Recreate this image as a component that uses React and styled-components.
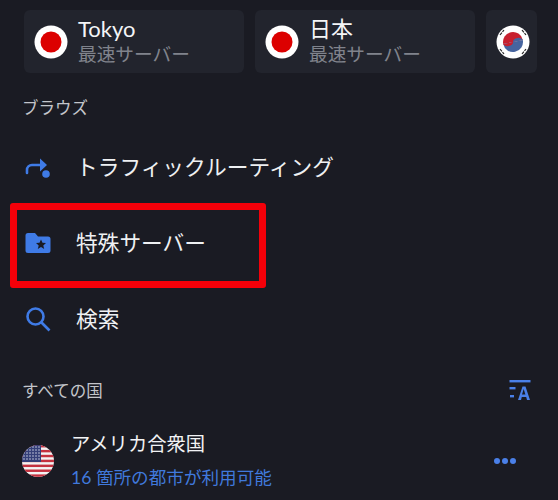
import React from 'react';
import styled, { createGlobalStyle } from 'styled-components';

const GlobalStyle = createGlobalStyle`
    html, body {
        margin: 0;
        padding: 0;
        background: #1a1b23;
    }
    * {
        box-sizing: border-box;
    }
`;

const Page = styled.div`
    width: 558px;
    height: 500px;
    overflow: hidden;
    background: #1a1b23;
    font-family: Lato, "Noto Sans CJK JP", sans-serif;
    color: #f2f3f5;
    padding-top: 10px;
`;

const Recents = styled.div`
    display: flex;
    gap: 11px;
    padding-left: 24px;
`;

const ServerCard = styled.div`
    flex: 0 0 ${p => p.$width}px;
    height: 63px;
    display: flex;
    align-items: center;
    gap: 10px;
    padding-left: 10px;
    background: #22242d;
    border-radius: 6px;
`;

const CardText = styled.div`
    display: flex;
    flex-direction: column;
    margin-top: -2px;
`;

const CardTitle = styled.div`
    font-size: 22px;
    line-height: 26px;
    color: #f4f5f7;
`;

const CardSub = styled.div`
    font-size: 18.7px;
    line-height: 24px;
    color: #80838c;
`;

const SectionLabel = styled.div`
    font-size: 16.5px;
    line-height: 20px;
    color: #c3c5ca;
    padding-left: 22px;
`;

const BrowseLabel = styled(SectionLabel)`
    margin-top: 25px;
    margin-bottom: 9px;
`;

const NavRow = styled.div`
    position: relative;
    height: 76px;
    display: flex;
    align-items: center;
    padding-left: 25px;
    font-size: 21.7px;
    color: #eef0f2;
`;

const NavIcon = styled.div`
    width: 51px;
    flex: none;
    display: flex;
    align-items: center;
    padding-top: 4px;
`;

const Highlight = styled.div`
    position: absolute;
    left: 10px;
    top: 0;
    width: 256px;
    height: 85px;
    border: 7px solid #f40009;
    border-radius: 3px;
`;

const AllHeader = styled.div`
    display: flex;
    align-items: center;
    justify-content: space-between;
    padding-right: 27px;
    margin-top: 25px;
`;

const CountryRow = styled.div`
    display: flex;
    align-items: center;
    padding: 30px 42px 0 22px;
`;

const CountryText = styled.div`
    flex: 1;
    margin-left: 17px;
    display: flex;
    flex-direction: column;
    gap: 9px;
`;

const CountryName = styled.div`
    font-size: 19.3px;
    line-height: 26px;
    color: #f2f3f5;
`;

const CountrySub = styled.div`
    font-size: 17.6px;
    line-height: 24px;
    color: #4079dc;
`;

const Dots = styled.div`
    display: flex;
    gap: 2px;
`;

const Dot = styled.span`
    width: 6px;
    height: 6px;
    border-radius: 50%;
    background: #4a80e8;
`;

const JapanFlag = () => (
    <svg width="34" height="34" viewBox="0 0 34 34">
        <circle cx="17" cy="17" r="16.5" fill="#fff" />
        <circle cx="17" cy="17" r="10.5" fill="#dc0000" />
    </svg>
);

const KoreaFlag = () => (
    <svg width="34" height="34" viewBox="0 0 34 34">
        <circle cx="17" cy="17" r="16.5" fill="#fff" />
        <g transform="rotate(-12 17 17)">
            <path d="M7 17a10 10 0 0 1 20 0z" fill="#c8202f" />
            <path d="M7 17a10 10 0 0 0 20 0z" fill="#46649f" />
            <path d="M17 17a5 3 0 0 1 10 0z" fill="#46649f" />
            <path d="M7 17a5 3 0 0 0 10 0z" fill="#c8202f" />
        </g>
        <g stroke="#222" strokeWidth="1.2" strokeDasharray="3 1">
            <path d="M4 10l4-5" />
            <path d="M26 5l4 5" />
            <path d="M4 24l4 5" />
            <path d="M26 29l4-5" />
        </g>
    </svg>
);

const UsaFlag = () => (
    <svg width="32" height="32" viewBox="0 0 32 32">
        <defs>
            <clipPath id="usa-clip">
                <circle cx="16" cy="16" r="16" />
            </clipPath>
        </defs>
        <g clipPath="url(#usa-clip)">
            <rect width="32" height="32" fill="#f4f4f4" />
            {[0, 1, 2, 3, 4, 5, 6].map(i => (
                <rect key={i} y={i * 4.9} width="32" height="2.45" fill="#c4313f" />
            ))}
            <rect width="19" height="17" fill="#343f78" />
            {[2, 5, 8, 11, 14].map(y =>
                [2, 5, 8, 11, 14, 17].map(x => (
                    <circle key={`${x}-${y}`} cx={x} cy={y} r="0.8" fill="#c9cee0" />
                ))
            )}
        </g>
    </svg>
);

const RoutingIcon = () => (
    <svg width="26" height="24" viewBox="0 0 26 24" fill="none">
        <path d="M2 18v-3a5 5 0 0 1 5-5h9" stroke="#3f7be6" strokeWidth="2.6" strokeLinecap="round" />
        <path d="M15 3.5l7 6.5-7 6.5z" fill="#3f7be6" />
        <circle cx="21" cy="19" r="3.8" fill="#3f7be6" />
    </svg>
);

const FolderStarIcon = () => (
    <svg width="26" height="22" viewBox="0 0 26 22">
        <path d="M3 1h7l3 3.5h10a2.5 2.5 0 0 1 2.5 2.5v11.5a2.5 2.5 0 0 1-2.5 2.5h-20a2.5 2.5 0 0 1-2.5-2.5v-15a2.5 2.5 0 0 1 2.5-2.5z" fill="#3f7be6" />
        <path d="M16 7.5l1.5 3.3 3.5.3-2.7 2.3.9 3.5-3.2-1.9-3.2 1.900.9-3.500-2.700-2.300 3.500-.3z" fill="#1a1b23" />
    </svg>
);

const SearchIcon = () => (
    <svg width="26" height="26" viewBox="0 0 26 26" fill="none">
        <circle cx="10.5" cy="10.5" r="8" stroke="#3f7be6" strokeWidth="2.6" />
        <path d="M16.5 16.5l8 8" stroke="#3f7be6" strokeWidth="2.6" />
    </svg>
);

const SortIcon = () => (
    <svg width="22" height="21" viewBox="0 0 22 21">
        <rect x="0.5" y="0" width="21" height="2.4" fill="#4a80e8" />
        <rect x="0.5" y="7" width="6" height="2.4" fill="#4a80e8" />
        <rect x="1" y="15" width="4" height="2.4" fill="#4a80e8" />
        <path d="M9 20l4.5-13.500h3l4.500 13.500h-3l-.8-3h-4.400l-.8 3zM13 14.500h3.400l-1.700-5.500z" fill="#4a80e8" fillRule="evenodd" />
    </svg>
);

const App = () => (
    <Page>
        <GlobalStyle />
        <Recents>
            <ServerCard $width={220}>
                <JapanFlag />
                <CardText>
                    <CardTitle>Tokyo</CardTitle>
                    <CardSub>最速サーバー</CardSub>
                </CardText>
            </ServerCard>
            <ServerCard $width={220}>
                <JapanFlag />
                <CardText>
                    <CardTitle>日本</CardTitle>
                    <CardSub>最速サーバー</CardSub>
                </CardText>
            </ServerCard>
            <ServerCard $width={51}>
                <KoreaFlag />
            </ServerCard>
        </Recents>

        <BrowseLabel>ブラウズ</BrowseLabel>
        <NavRow>
            <NavIcon><RoutingIcon /></NavIcon>
            トラフィックルーティング
        </NavRow>
        <NavRow>
            <NavIcon><FolderStarIcon /></NavIcon>
            特殊サーバー
            <Highlight />
        </NavRow>
        <NavRow>
            <NavIcon><SearchIcon /></NavIcon>
            検索
        </NavRow>

        <AllHeader>
            <SectionLabel>すべての国</SectionLabel>
            <SortIcon />
        </AllHeader>
        <CountryRow>
            <UsaFlag />
            <CountryText>
                <CountryName>アメリカ合衆国</CountryName>
                <CountrySub>16 箇所の都市が利用可能</CountrySub>
            </CountryText>
            <Dots>
                <Dot />
                <Dot />
                <Dot />
            </Dots>
        </CountryRow>
    </Page>
);

export default App;
